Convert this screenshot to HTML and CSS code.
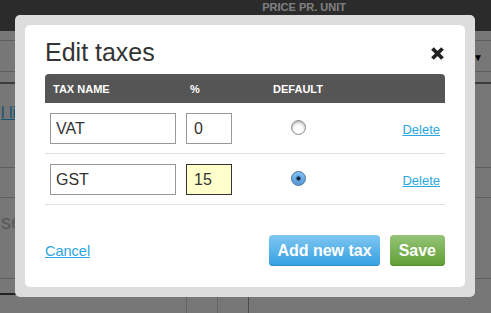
FILE: index.html
```html
<!DOCTYPE html>
<html lang="en">
<head>
    <meta charset="UTF-8">
    <meta name="viewport" content="width=device-width, initial-scale=1.0">
    <title>Edit taxes</title>
    <link rel="stylesheet" href="styles.css">
</head>
<body>
    <!-- Invoice page behind the dialog -->
    <div class="page">
        <div class="lines-head">
            <div class="head-col head-qty">QUANTITY</div>
            <div class="head-col head-price">PRICE PR. UNIT<br>EXCL. TAX</div>
            <div class="head-col head-total">TOTAL</div>
        </div>
        <div class="page-strip"></div>
        <div class="page-row row-select">
            <span class="select-arrow">&#9660;</span>
        </div>
        <div class="page-row row-link">
            <a href="#" class="page-link">l line</a>
        </div>
        <div class="page-row row-plain"></div>
        <div class="page-row row-search">
            <span class="page-hint">se</span>
        </div>
        <div class="page-row row-bottom">
            <div class="page-input"></div>
        </div>
        <div class="page-cells">
            <div class="page-cell cell-a"></div>
            <div class="page-cell cell-b"></div>
            <div class="page-cell cell-c"></div>
        </div>
    </div>

    <div class="backdrop"></div>

    <div class="modal">
        <div class="modal-inner">
            <div class="modal-header">
                <h1 class="modal-title">Edit taxes</h1>
                <a href="#" class="modal-close" title="Close">
                    <svg width="15" height="15" viewBox="0 0 15 15">
                        <path d="M2.5 2.5 L12.5 12.5 M12.5 2.5 L2.5 12.5" stroke="#222" stroke-width="3.8" stroke-linecap="butt" fill="none"/>
                    </svg>
                </a>
            </div>

            <div class="tax-table">
                <div class="tax-row tax-head">
                    <div class="col-name">TAX NAME</div>
                    <div class="col-rate">%</div>
                    <div class="col-default">DEFAULT</div>
                    <div class="col-action"></div>
                </div>
                <div class="tax-row">
                    <div class="col-name"><input type="text" class="tax-input name-input" value="VAT"></div>
                    <div class="col-rate"><input type="text" class="tax-input rate-input" value="0"></div>
                    <div class="col-default"><span class="radio"></span></div>
                    <div class="col-action"><a href="#" class="link">Delete</a></div>
                </div>
                <div class="tax-row">
                    <div class="col-name"><input type="text" class="tax-input name-input" value="GST"></div>
                    <div class="col-rate"><input type="text" class="tax-input rate-input focused" value="15"></div>
                    <div class="col-default"><span class="radio checked"></span></div>
                    <div class="col-action"><a href="#" class="link">Delete</a></div>
                </div>
            </div>

            <div class="modal-footer">
                <a href="#" class="link cancel-link">Cancel</a>
                <div class="footer-buttons">
                    <button class="btn btn-blue">Add new tax</button>
                    <button class="btn btn-green">Save</button>
                </div>
            </div>
        </div>
    </div>
</body>
</html>
```

FILE: styles.css
```css
body {
    font-family: "Liberation Sans", Arial, sans-serif;
    margin: 0;
    width: 491px;
    height: 313px;
    overflow: hidden;
    background-color: #eee;
}

/* ---------- page behind the dialog ---------- */

.page {
    width: 491px;
}

.lines-head {
    display: flex;
    height: 31px;
    background-color: #565656;
    color: #fff;
    font-size: 11px;
    font-weight: bold;
    line-height: 12px;
    padding-top: 1px;
    box-sizing: border-box;
}

.head-qty {
    margin-left: 170px;
    padding-top: 12px;
}

.head-price {
    margin-left: 36px;
}

.head-total {
    margin-left: 47px;
    padding-top: 12px;
}

.page-strip {
    height: 9px;
    border-bottom: 1px solid #bdbdbd;
}

.page-row {
    border-bottom: 1px solid #bdbdbd;
    position: relative;
}

.row-select {
    height: 30px;
    display: flex;
    justify-content: flex-end;
    align-items: center;
}

.select-arrow {
    font-size: 10px;
    color: #000;
    margin-right: 8px;
    margin-top: 3px;
}

.row-link {
    height: 86px;
    border-top: 2px solid #777;
    padding-top: 10px;
    box-sizing: border-box;
    margin-top: 10px;
}

.page-link {
    font-size: 16px;
    color: #2ba6e1;
    margin-left: 1px;
    display: inline-block;
    margin-top: 10px;
}

.row-plain {
    height: 29px;
}

.row-search {
    height: 81px;
    padding-top: 13px;
    box-sizing: border-box;
}

.page-hint {
    font-size: 20px;
    color: #b0b0b0;
    margin-left: 1px;
}

.row-bottom {
    height: 17px;
    border-bottom: none;
}

.page-input {
    width: 155px;
    height: 14px;
    border-bottom: 2px solid #444;
    border-bottom-right-radius: 4px;
    background: linear-gradient(to right, transparent 138px, #8ab8c8 138px);
}

.page-cells {
    display: flex;
    height: 20px;
    padding-left: 186px;
}

.page-cell {
    width: 30px;
    border-left: 1px solid #c8c8c8;
}

.cell-c {
    border-left: 1px solid #999;
}

.backdrop {
    position: fixed;
    top: 0;
    left: 0;
    right: 0;
    bottom: 0;
    background-color: rgba(0, 0, 0, 0.5);
}

/* ---------- dialog ---------- */

.modal {
    position: fixed;
    top: 15px;
    left: 15px;
    width: 460px;
    padding: 10px;
    box-sizing: border-box;
    background-color: #ddd;
    border-radius: 5px;
}

.modal-inner {
    background-color: #fff;
    border-radius: 5px;
    padding: 13px 20px 21px;
}

.modal-header {
    display: flex;
    justify-content: space-between;
    align-items: center;
    margin-bottom: 7px;
}

.modal-title {
    margin: 0;
    font-size: 25px;
    font-weight: normal;
    line-height: 29px;
    color: #333;
}

.modal-close {
    display: block;
    width: 15px;
    height: 15px;
    margin-top: 1px;
}

.modal-close svg {
    display: block;
}

.tax-row {
    display: grid;
    grid-template-columns: 136px 71px 92px 1fr;
    align-items: center;
    padding: 10px 0 9px;
    border-bottom: 1px solid #e0e0e0;
}

.tax-head {
    height: 29px;
    padding: 0;
    box-sizing: border-box;
    background-color: #555;
    border-bottom: none;
    border-radius: 4px 4px 0 0;
    color: #fff;
    font-size: 11px;
    font-weight: bold;
}

.tax-head .col-name {
    padding-left: 8px;
}

.tax-head .col-rate {
    padding-left: 9px;
}

.col-name,
.col-rate {
    padding-left: 5px;
}

.col-default {
    display: flex;
    justify-content: center;
}

.col-action {
    text-align: right;
    padding-right: 5px;
}

.tax-input {
    display: block;
    height: 31px;
    box-sizing: border-box;
    border: 1px solid #999;
    padding: 0 5px;
    font-family: "Liberation Sans", Arial, sans-serif;
    font-size: 16px;
    color: #333;
    outline: none;
}

.name-input {
    width: 126px;
}

.rate-input {
    width: 46px;
    padding-left: 7px;
}

.rate-input.focused {
    background-color: #ffffcc;
    border-color: #333;
}

.radio {
    width: 15px;
    height: 15px;
    margin-top: -3px;
    border-radius: 50%;
    box-sizing: border-box;
    border: 1px solid #8a8a8a;
    background: radial-gradient(circle at 50% 70%, #fff 30%, #d8d8d8 100%);
    box-shadow: inset 0 1px 2px rgba(0,0,0,0.25);
}

.radio.checked {
    border-color: #3f6d98;
    background: radial-gradient(circle, #1c2a3a 0, #1c2a3a 1.8px, #5aa8ec 2.4px, #b8dcf8 100%);
    box-shadow: inset 0 -2px 3px rgba(30,90,170,0.5);
}

.link {
    color: #2ba6e1;
    font-size: 13px;
    text-decoration: underline;
}

.modal-footer {
    display: flex;
    justify-content: space-between;
    align-items: center;
    margin-top: 30px;
}

.cancel-link {
    font-size: 14.5px;
}

.footer-buttons {
    display: flex;
    gap: 10px;
}

.btn {
    height: 31px;
    padding: 0 8px;
    border: none;
    border-radius: 4px;
    font-family: "Liberation Sans", Arial, sans-serif;
    font-size: 16px;
    font-weight: bold;
    color: #fff;
    cursor: pointer;
}

.btn-blue {
    background: linear-gradient(#7fc6f1, #35a0e2);
    box-shadow: inset 0 -1px 0 #2f8fcc;
}

.btn-green {
    background: linear-gradient(#95c476, #5f9e35);
    box-shadow: inset 0 -1px 0 #548e2e;
    padding: 0 9px;
}
```
